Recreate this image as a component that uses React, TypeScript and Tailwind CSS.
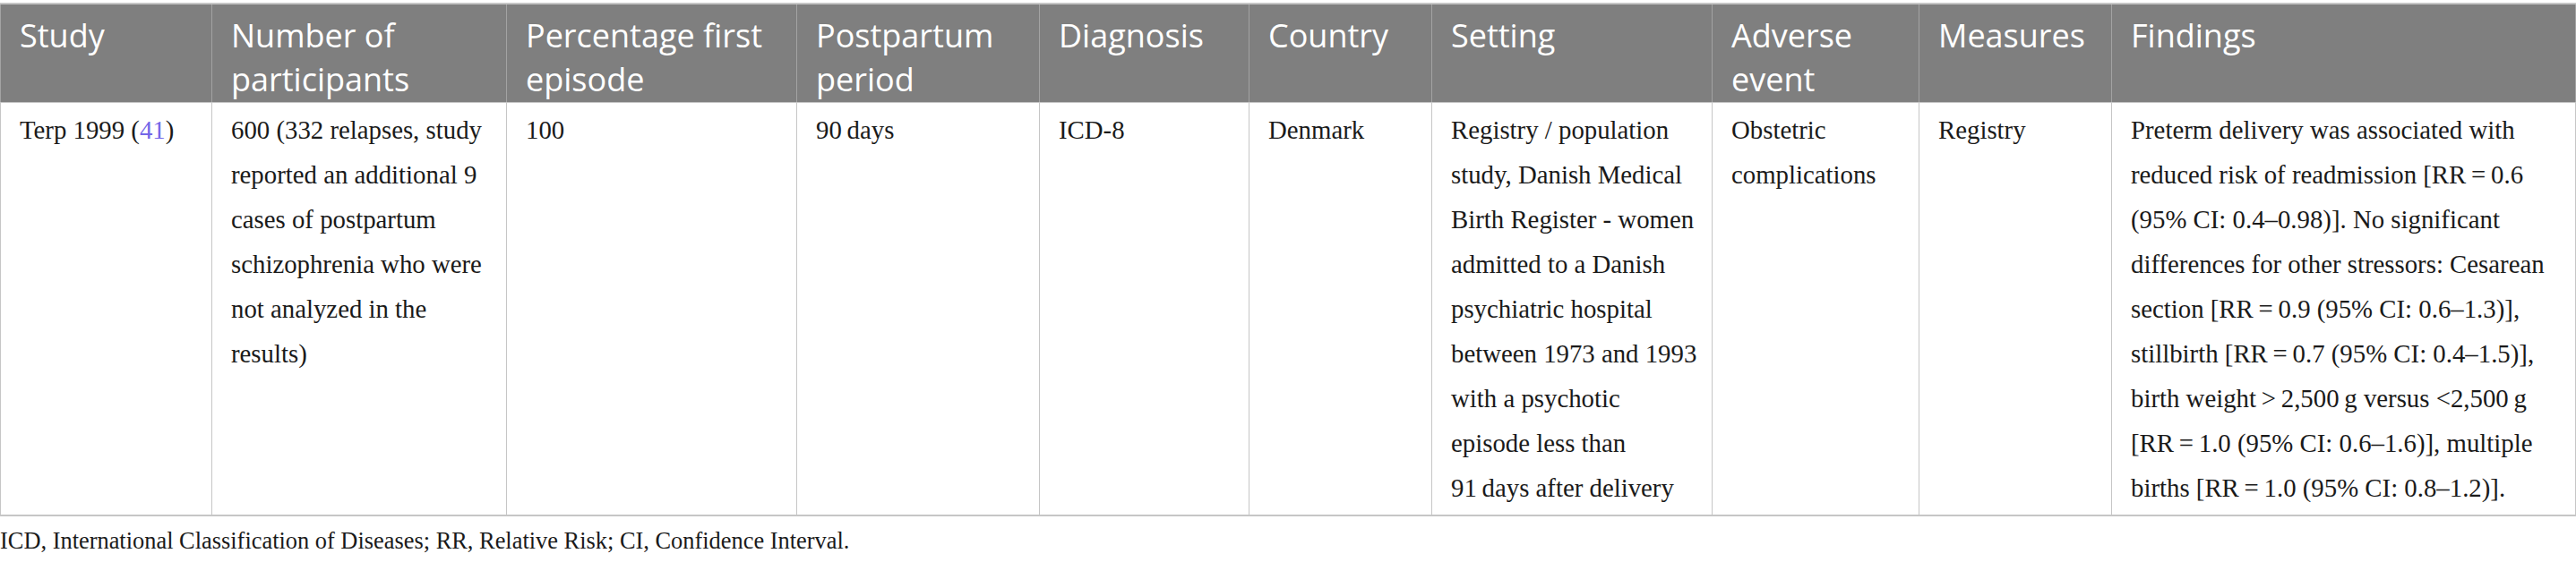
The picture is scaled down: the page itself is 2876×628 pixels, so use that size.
import React from "react";

const T = "\u2009";

const headers: string[][] = [
  ["Study"],
  ["Number of", "participants"],
  ["Percentage first", "episode"],
  ["Postpartum", "period"],
  ["Diagnosis"],
  ["Country"],
  ["Setting"],
  ["Adverse", "event"],
  ["Measures"],
  ["Findings"],
];

const widths = [
  "w-[236px]",
  "w-[329px]",
  "w-[324px]",
  "w-[271px]",
  "w-[234px]",
  "w-[204px]",
  "w-[313px]",
  "w-[231px]",
  "w-[215px]",
  "w-[519px]",
];

const body: React.ReactNode[][] = [
  [
    <span key="t">
      Terp 1999 (<span className="text-[#7466e8]">41</span>)
    </span>,
  ],
  [
    "600 (332 relapses, study",
    "reported an additional 9",
    "cases of postpartum",
    "schizophrenia who were",
    "not analyzed in the",
    "results)",
  ],
  ["100"],
  [`90${T}days`],
  ["ICD-8"],
  ["Denmark"],
  [
    "Registry / population",
    "study, Danish Medical",
    "Birth Register - women",
    "admitted to a Danish",
    "psychiatric hospital",
    "between 1973 and 1993",
    "with a psychotic",
    "episode less than",
    `91${T}days after delivery`,
  ],
  ["Obstetric", "complications"],
  ["Registry"],
  [
    "Preterm delivery was associated with",
    `reduced risk of readmission [RR${T}=${T}0.6`,
    "(95% CI: 0.4–0.98)]. No significant",
    "differences for other stressors: Cesarean",
    `section [RR${T}=${T}0.9 (95% CI: 0.6–1.3)],`,
    `stillbirth [RR${T}=${T}0.7 (95% CI: 0.4–1.5)],`,
    `birth weight${T}>${T}2,500${T}g versus <2,500${T}g`,
    `[RR${T}=${T}1.0 (95% CI: 0.6–1.6)], multiple`,
    `births [RR${T}=${T}1.0 (95% CI: 0.8–1.2)].`,
  ],
];

export default function App() {
  return (
    <div className="w-[2876px] h-[628px] bg-white overflow-hidden pt-[3px]">
      <div className="border-t-2 border-[#c6c6c6]">
        <div className="flex bg-[#7f7f7f]">
          {headers.map((lines, i) => (
            <div
              key={i}
              className={`${widths[i]} shrink-0 h-[109px] border-l border-[#a3a3a3] ${
                i === headers.length - 1 ? "border-r" : ""
              } pl-[21px] pt-[10px] text-white text-[36px] leading-[49px] whitespace-nowrap`}
              style={{ fontFamily: '"Open Sans", "Noto Sans", sans-serif' }}
            >
              {lines.map((l, j) => (
                <div key={j}>{l}</div>
              ))}
            </div>
          ))}
        </div>
        <div className="flex border-t border-[#c6c6c6] border-b-2">
          {body.map((lines, i) => (
            <div
              key={i}
              className={`${widths[i]} shrink-0 h-[460px] border-l border-[#c6c6c6] ${
                i === body.length - 1 ? "border-r" : ""
              } pl-[21px] pt-[5px] text-[#1a1a1a] text-[28.8px] leading-[50px] whitespace-nowrap`}
              style={{ fontFamily: '"Liberation Serif", "Times New Roman", serif' }}
            >
              {lines.map((l, j) => (
                <div key={j}>{l}</div>
              ))}
            </div>
          ))}
        </div>
      </div>
      <div
        className="mt-[9px] text-[#1a1a1a] text-[26.4px] leading-[36px] whitespace-nowrap"
        style={{ fontFamily: '"Liberation Serif", "Times New Roman", serif' }}
      >
        ICD, International Classification of Diseases; RR, Relative Risk; CI, Confidence Interval.
      </div>
    </div>
  );
}
